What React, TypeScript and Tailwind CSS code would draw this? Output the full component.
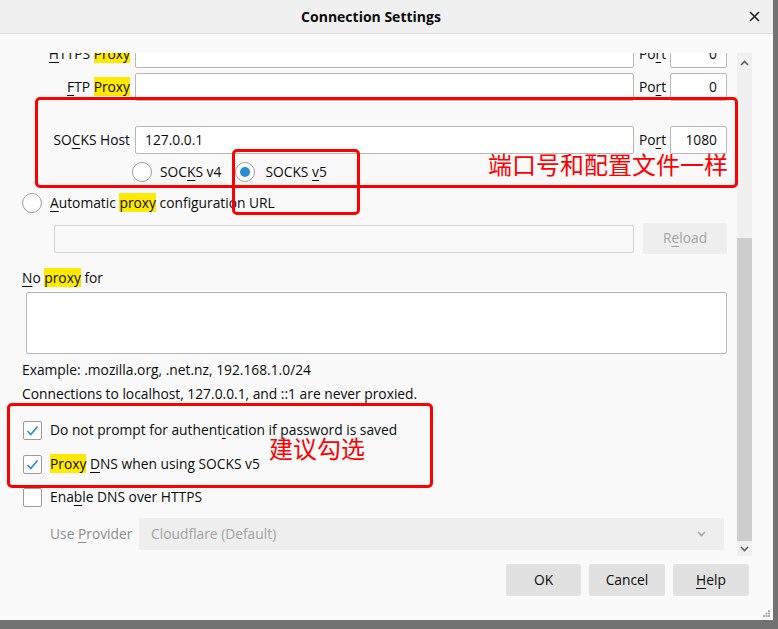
import type { ReactNode } from "react";

const U = ({ children }: { children: ReactNode }) => (
  <span className="underline decoration-1 underline-offset-[3px]">{children}</span>
);

const Hl = ({ children }: { children: ReactNode }) => <span className="bg-[#ffe900]">{children}</span>;

const Radio = ({ checked = false }: { checked?: boolean }) => (
  <span className="w-[20px] h-[20px] rounded-full border border-[#9a9a9a] bg-white flex items-center justify-center shrink-0">
    {checked && <span className="w-[10px] h-[10px] rounded-full bg-[#2a8ad4]" />}
  </span>
);

const Check = ({ checked = false }: { checked?: boolean }) => (
  <span className="w-[19px] h-[19px] rounded-[2px] border border-[#9a9a9a] bg-white flex items-center justify-center shrink-0">
    {checked && (
      <svg width="13" height="11" viewBox="0 0 13 11">
        <polyline points="1.5,6 4.8,9.5 11.5,1.5" fill="none" stroke="#2a8ad4" strokeWidth="1.6" />
      </svg>
    )}
  </span>
);

const Chevron = ({ up = false, color = "#5f5f5f" }: { up?: boolean; color?: string }) => (
  <svg width="9" height="6" viewBox="0 0 9 6">
    <polyline
      points={up ? "1,5 4.5,1.5 8,5" : "1,1 4.5,4.5 8,1"}
      fill="none"
      stroke={color}
      strokeWidth="1.6"
    />
  </svg>
);

const ProxyRow = ({ label, host = "", port, className = "" }: { label: ReactNode; host?: string; port: string; className?: string }) => (
  <div className={`flex items-center h-[28px] ${className}`}>
    <div className="w-[131px] text-right pr-[1px] whitespace-nowrap">{label}</div>
    <div className="ml-[4px] w-[499px] h-[28px] bg-white border border-[#b8b8b8] rounded-[2px] flex items-center pl-[9px]">
      {host}
    </div>
    <div className="ml-[5px] w-[27px]">
      Po<U>r</U>t
    </div>
    <div className="ml-[4px] w-[57px] h-[28px] bg-white border border-[#b8b8b8] rounded-[2px] flex items-center justify-end pr-[9px]">
      {port}
    </div>
  </div>
);

export default function App() {
  return (
    <div
      className="w-[778px] h-[629px] bg-[#727272] relative overflow-hidden text-[13.8px] text-[#0c0c0d]"
      style={{ fontFamily: '"Open Sans", "Noto Sans CJK SC", sans-serif' }}
    >
      <div className="w-[773px] h-[620px] bg-[#f9f9f9] flex flex-col relative">
        {/* title bar */}
        <div className="h-[34px] bg-[#f0f0f0] border-b border-[#dadada] flex items-center shrink-0">
          <div className="flex-1 text-center font-bold text-[14px] pr-[7px]">Connection Settings</div>
          <svg className="mr-[13px]" width="11" height="11" viewBox="0 0 11 11">
            <path d="M1 1 L10 10 M10 1 L1 10" stroke="#1a1a1a" strokeWidth="1.5" />
          </svg>
        </div>

        <div className="flex mt-[19px] h-[503px] shrink-0">
          {/* scrolled content */}
          <div className="w-[737px] h-[503px] overflow-hidden">
            <div className="mt-[-13px] pr-[10px]">
              <ProxyRow
                label={
                  <>
                    <U>H</U>TTPS <Hl>Proxy</Hl>
                  </>
                }
                port="0"
              />
              <ProxyRow
                className="mt-[5px]"
                label={
                  <>
                    <U>F</U>TP <Hl>Proxy</Hl>
                  </>
                }
                port="0"
              />
              <ProxyRow
                className="mt-[25px]"
                label={
                  <>
                    SO<U>C</U>KS Host
                  </>
                }
                host="127.0.0.1"
                port="1080"
              />
              <div className="flex items-center h-[20px] mt-[8px] pl-[132px]">
                <Radio />
                <span className="ml-[8px]">
                  SOC<U>K</U>S v4
                </span>
                <span className="ml-[14px]" />
                <Radio checked />
                <span className="ml-[10px]">
                  SOCKS <U>v</U>5
                </span>
              </div>
              <div className="flex items-center h-[20px] mt-[11px] pl-[22px]">
                <Radio />
                <span className="ml-[8px]">
                  <U>A</U>utomatic <Hl>proxy</Hl> configuration URL
                </span>
              </div>
              <div className="flex items-center h-[31px] mt-[10px] pl-[54px]">
                <div className="w-[580px] h-[28px] border border-[#d4d4d4] rounded-[2px] bg-[#f9f9f9]" />
                <div className="ml-[9px] w-[84px] h-[31px] bg-[#eeeeee] rounded-[2px] flex items-center justify-center text-[#a3a3a3]">
                  R<U>e</U>load
                </div>
              </div>
              <div className="h-[20px] leading-[20px] mt-[14px] pl-[22px]">
                <U>N</U>o <Hl>proxy</Hl> for
              </div>
              <div className="ml-[26px] mt-[4px] h-[62px] bg-white border border-[#b8b8b8] rounded-[2px]" />
              <div className="h-[20px] leading-[20px] mt-[6px] pl-[22px]">Example: .mozilla.org, .net.nz, 192.168.1.0/24</div>
              <div className="h-[20px] leading-[20px] mt-[4px] pl-[22px] whitespace-nowrap">
                Connections to localhost, 127.0.0.1, and ::1 are never proxied.
              </div>
              <div className="flex items-center h-[20px] mt-[16px] pl-[23px]">
                <Check checked />
                <span className="ml-[8px]">
                  Do not prompt for authent<U>i</U>cation if password is saved
                </span>
              </div>
              <div className="flex items-center h-[20px] mt-[14px] pl-[23px]">
                <Check checked />
                <span className="ml-[8px]">
                  <Hl>Proxy</Hl> <U>D</U>NS when using SOCKS v5
                </span>
              </div>
              <div className="flex items-center h-[20px] mt-[13px] pl-[23px]">
                <Check />
                <span className="ml-[8px]">
                  Ena<U>b</U>le DNS over HTTPS
                </span>
              </div>
              <div className="flex items-center h-[32px] mt-[11px] pl-[50px]">
                <span className="w-[89px] text-[#8c8c8c]">
                  Use <U>P</U>rovider
                </span>
                <div className="w-[585px] h-[32px] bg-[#eeeeee] rounded-[2px] flex items-center justify-between pl-[12px] pr-[18px] text-[#a3a3a3]">
                  <span>Cloudflare (Default)</span>
                  <Chevron color="#a8a8a8" />
                </div>
              </div>
            </div>
          </div>

          {/* scrollbar */}
          <div className="w-[15px] h-[503px] bg-[#f0f0f0] flex flex-col">
            <div className="h-[17px] flex items-center justify-center pt-[2px]">
              <Chevron up />
            </div>
            <div className="h-[168px]" />
            <div className="h-[303px] bg-[#cdcdcd]" />
            <div className="h-[15px] flex items-center justify-center">
              <Chevron />
            </div>
          </div>
        </div>

        {/* buttons */}
        <div className="flex justify-end gap-[8px] mt-[8px] pr-[24px]">
          <div className="w-[75px] h-[32px] bg-[#e1e1e1] rounded-[2px] flex items-center justify-center">OK</div>
          <div className="w-[76px] h-[32px] bg-[#e1e1e1] rounded-[2px] flex items-center justify-center">Cancel</div>
          <div className="w-[76px] h-[32px] bg-[#e1e1e1] rounded-[2px] flex items-center justify-center">
            <U>H</U>elp
          </div>
        </div>

        {/* resize grip */}
        <svg className="absolute right-[3px] bottom-[3px]" width="7" height="7" viewBox="0 0 7 7">
          <rect x="5" y="0" width="2" height="2" fill="#b0b0b0" />
          <rect x="2.5" y="2.5" width="2" height="2" fill="#b0b0b0" />
          <rect x="5" y="2.5" width="2" height="2" fill="#b0b0b0" />
          <rect x="0" y="5" width="2" height="2" fill="#b0b0b0" />
          <rect x="2.5" y="5" width="2" height="2" fill="#b0b0b0" />
          <rect x="5" y="5" width="2" height="2" fill="#b0b0b0" />
        </svg>
      </div>

      {/* red annotations */}
      <div className="absolute left-[35px] top-[97px] w-[703px] h-[91px] border-[3px] border-[#f00] rounded-[5px]" />
      <div className="absolute left-[232px] top-[149px] w-[128px] h-[66px] border-[3px] border-[#f00] rounded-[5px]" />
      <div className="absolute left-[7px] top-[403px] w-[426px] h-[85px] border-[3px] border-[#f00] rounded-[5px]" />
      <div className="absolute left-[488px] top-[149px] text-[24px] leading-[32px] text-[#f00] whitespace-nowrap">端口号和配置文件一样</div>
      <div className="absolute left-[269px] top-[433px] text-[24px] leading-[32px] text-[#f00] whitespace-nowrap">建议勾选</div>
    </div>
  );
}
